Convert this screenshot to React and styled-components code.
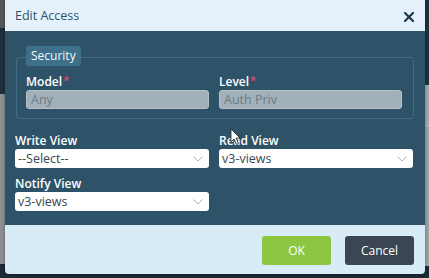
import React from "react";
import styled, { createGlobalStyle } from "styled-components";

const Global = createGlobalStyle`
  html, body { margin: 0; padding: 0; }
  body { width: 429px; height: 278px; overflow: hidden; background: #1c2d38; font-family: "Open Sans", "Liberation Sans", sans-serif; }
`;

const Backdrop = styled.div`
  position: relative;
  width: 429px;
  height: 278px;
  display: grid;
  grid-template-columns: 1fr 1fr;
`;

const Side = styled.div`
  display: flex;
  flex-direction: column;
`;

const Band = styled.div`
  height: ${(p) => p.$h}px;
  background: ${(p) => p.$bg};
  border-bottom: ${(p) => (p.$line ? "1px solid #b8bcbe" : "none")};
  flex: ${(p) => (p.$grow ? 1 : "none")};
`;

const Dialog = styled.div`
  position: absolute;
  left: 5px;
  top: 0;
  width: 420px;
  height: 274px;
  display: flex;
  flex-direction: column;
  border-radius: 0 0 4px 4px;
  overflow: hidden;
  box-shadow: 0 0 3px rgba(0, 0, 0, 0.4);
`;

const Header = styled.div`
  height: 31px;
  flex: none;
  background: #e4f1fb;
  display: flex;
  align-items: center;
  justify-content: space-between;
  padding: 0 10px 0 10px;
  box-sizing: border-box;
`;

const Title = styled.div`
  font-size: 12.5px;
  color: #2e5169;
  margin-top: -1px;
`;

const Close = styled.div`
  width: 12px;
  height: 12px;
  display: flex;
  align-items: center;
  justify-content: center;
  margin-top: 2px;
`;

const Body = styled.div`
  flex: 1;
  background: #2e5369;
  padding: 15px 11px 0 10px;
  box-sizing: border-box;
  display: flex;
  flex-direction: column;
`;

const Fieldset = styled.div`
  position: relative;
  margin-top: 11px;
  margin-left: 1px;
  border: 1px solid #426c84;
  border-radius: 3px;
  height: 62px;
  box-sizing: border-box;
  padding: 15px 11px 0 9px;
  display: grid;
  grid-template-columns: 1fr 1fr;
  column-gap: 10px;
`;

const Legend = styled.div`
  position: absolute;
  left: 9px;
  top: -12px;
  height: 20px;
  padding: 0 5px;
  background: #3e7089;
  border-radius: 3px;
  color: #f2f7fa;
  font-size: 12px;
  line-height: 20px;
`;

const Field = styled.div`
  display: flex;
  flex-direction: column;
`;

const Label = styled.div`
  color: #ffffff;
  font-size: 12px;
  font-weight: 600;
  line-height: 15px;
  height: 15px;
  margin-bottom: 1px;
  margin-top: 1px;
`;

const Req = styled.span`
  color: #e2457c;
  font-size: 11px;
  margin-left: 1px;
  position: relative;
  top: -2px;
`;

const Disabled = styled.div`
  height: 19px;
  box-sizing: border-box;
  background: #a2b0b9;
  border: 1px solid #b6c1c7;
  border-radius: 3px;
  color: #6c7c86;
  font-size: 12.5px;
  line-height: 17px;
  padding-left: 4px;
`;

const Grid = styled.div`
  margin-top: 13px;
  display: grid;
  grid-template-columns: 194px 194px;
  column-gap: 10px;
  row-gap: 7px;
`;

const Select = styled.div`
  height: 19px;
  box-sizing: border-box;
  background: #ffffff;
  border-radius: 3px;
  color: #37474f;
  font-size: 12.5px;
  line-height: 19px;
  padding: 0 6px 0 3px;
  display: flex;
  align-items: center;
  justify-content: space-between;
`;

const Footer = styled.div`
  height: 49px;
  flex: none;
  background: #d8ecf8;
  display: flex;
  justify-content: flex-end;
  align-items: flex-start;
  gap: 14px;
  padding: 11px 11px 0 0;
  box-sizing: border-box;
`;

const Button = styled.div`
  width: 69px;
  height: 29px;
  border-radius: 3px;
  background: ${(p) => (p.$primary ? "#8dc641" : "#3b4553")};
  color: #ffffff;
  font-size: 12px;
  display: flex;
  align-items: center;
  justify-content: center;
`;

const Chevron = () => (
  <svg width="10" height="6" viewBox="0 0 10 6">
    <path d="M0.5 0.5 L5 5 L9.5 0.5" fill="none" stroke="#a9b1b6" strokeWidth="1" />
  </svg>
);

const Cursor = styled.svg`
  position: absolute;
  left: 230px;
  top: 128px;
`;

function SelectBox({ value }) {
  return (
    <Select>
      <span>{value}</span>
      <Chevron />
    </Select>
  );
}

export default function App() {
  return (
    <>
      <Global />
      <Backdrop>
        <Side>
          <Band $h={28} $bg="#52575b" />
          <Band $h={66} $bg="#1c303c" />
          <Band $h={170} $bg="#8b8f92" />
          <Band $grow $bg="#1b2a33" />
        </Side>
        <Side>
          <Band $h={85} $bg="#1d3140" />
          <Band $h={40} $bg="#a1a6a9" $line />
          <Band $h={140} $bg="#9ca1a4" />
          <Band $grow $bg="#1b2a33" />
        </Side>
        <Dialog>
          <Header>
            <Title>Edit Access</Title>
            <Close>
              <svg width="10" height="10" viewBox="0 0 10 10">
                <path d="M1 1 L9 9 M9 1 L1 9" stroke="#1f3a4d" strokeWidth="2.2" strokeLinecap="square" />
              </svg>
            </Close>
          </Header>
          <Body>
            <Fieldset>
              <Legend>Security</Legend>
              <Field>
                <Label>
                  Model<Req>*</Req>
                </Label>
                <Disabled>Any</Disabled>
              </Field>
              <Field>
                <Label>
                  Level<Req>*</Req>
                </Label>
                <Disabled>Auth Priv</Disabled>
              </Field>
            </Fieldset>
            <Grid>
              <Field>
                <Label>Write View</Label>
                <SelectBox value="--Select--" />
              </Field>
              <Field>
                <Label>Read View</Label>
                <SelectBox value="v3-views" />
              </Field>
              <Field>
                <Label>Notify View</Label>
                <SelectBox value="v3-views" />
              </Field>
            </Grid>
          </Body>
          <Footer>
            <Button $primary>OK</Button>
            <Button>Cancel</Button>
          </Footer>
        </Dialog>
        <Cursor width="12" height="18" viewBox="0 0 12 18">
          <path d="M1 1 L1 14 L4 11 L6.5 16.5 L8.5 15.5 L6 10 L10 10 Z" fill="#ffffff" stroke="#222" strokeWidth="0.8" />
        </Cursor>
      </Backdrop>
    </>
  );
}
